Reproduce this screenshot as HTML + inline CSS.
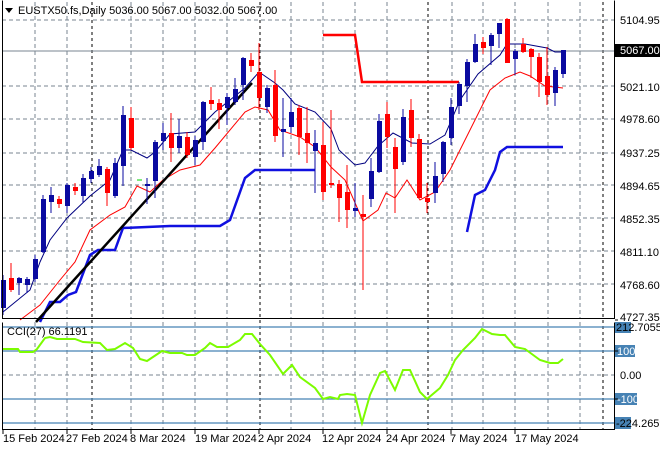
<!DOCTYPE html>
<html><head><meta charset="utf-8"><style>
html,body{margin:0;padding:0;background:#fff;width:660px;height:450px;overflow:hidden}
svg{display:block;font-family:"Liberation Sans",sans-serif;font-size:11px}
</style></head><body>
<svg width="660" height="450" viewBox="0 0 660 450" xmlns="http://www.w3.org/2000/svg">
<rect width="660" height="450" fill="#fff"/>
<g stroke="#7a8590" stroke-width="1" stroke-dasharray="4,3" fill="none">
<path d="M2 20H614M2 86H614M2 119H614M2 153H614M2 185H614M2 218H614M2 251H614M2 284H614"/>
<path d="M35 2V318M67 2V318M131 2V318M163 2V318M195 2V318M227 2V318M291 2V318M323 2V318M355 2V318M387 2V318M452 2V318M483 2V318M515 2V318M548 2V318M580 2V318"/>
<path d="M35 322V429M67 322V429M131 322V429M163 322V429M195 322V429M227 322V429M291 322V429M323 322V429M355 322V429M387 322V429M452 322V429M483 322V429M515 322V429M548 322V429M580 322V429"/>
<path d="M2 375H614"/>
</g>
<g stroke="#000" stroke-width="1" stroke-dasharray="3,3" fill="none">
<path d="M92 2V429M260 2V429M428 2V429M603 2V429"/>
</g>
<path d="M2 51H614" stroke="#7a8590" stroke-width="1"/>
<polyline fill="none" stroke="#1010e0" stroke-width="2.5" points="40,322 50,302 60,302 68,295 76,292 90,255 98,250 115,250 123,228 170,226 220,226 230,220 245,178 255,170 315,170"/>
<polyline fill="none" stroke="#1010e0" stroke-width="2.5" points="467,232 475,195 485,190 495,170 500,152 507,147 563,147"/>
<polyline fill="none" stroke="#f00" stroke-width="2.5" points="323,35 355,35 362,82 459,82"/>
<polyline fill="none" stroke="#000080" stroke-width="1" points="3,312 30,290 40,262 50,240 67,218 90,196 110,180 123,150 131,150 147,158 155,152 170,134 195,132 215,112 245,88 259,72 275,83 283,90 295,104 315,112 331,129 339,150 355,165 365,163 378,146 393,133 412,143 430,144 445,135 460,100 478,74 500,55 507,44 525,44 547,48 555,52 563,52"/>
<polyline fill="none" stroke="#f00" stroke-width="1" points="20,320 40,305 60,280 75,262 90,230 110,215 125,207 137,186 150,192 163,180 180,170 200,165 215,148 245,112 255,107 268,110 280,130 300,137 315,147 331,167 345,180 363,221 378,210 386,193 395,198 407,180 420,200 435,192 450,170 470,130 490,90 505,78 520,72 530,76 545,86 563,88"/>
<path d="M36 322L252 83" stroke="#000" stroke-width="2.5"/>
<g stroke="#0a0aa0" stroke-width="1" fill="none">
<path d="M3 275V315M19 277V295M27 277V293M35 255V282M43 195V253M51 187V213M67 183V213M83 174V203M91 167V183M99 159V177M115 158V198M123 106V186M147 178V204M155 140V198M163 123V150M179 119V153M195 136V165M203 101V150M227 93V125M235 78V105M243 57V100M267 85V113M283 98V157M291 98V133M315 130V193M355 183V217M371 158V207M379 114V173M403 109V165M435 162V203M443 141V182M451 98V145M459 82V114M467 59V102M475 34V63M491 33V65M499 23V48M515 49V75M555 67V106M563 50V78"/>
</g>
<g fill="#0a0aa0">
<rect x="1" y="280" width="5" height="28"/><rect x="17" y="278" width="5" height="5"/><rect x="25" y="279" width="5" height="6"/><rect x="33" y="259" width="5" height="20"/><rect x="41" y="199" width="5" height="53"/><rect x="49" y="195" width="5" height="7"/><rect x="65" y="185" width="5" height="21"/><rect x="81" y="178" width="5" height="18"/><rect x="89" y="171" width="5" height="8"/><rect x="97" y="166" width="5" height="9"/><rect x="113" y="163" width="5" height="33"/><rect x="121" y="115" width="5" height="51"/><rect x="145" y="184" width="5" height="2"/><rect x="153" y="142" width="5" height="39"/><rect x="161" y="133" width="5" height="8"/><rect x="177" y="136" width="5" height="12"/><rect x="193" y="140" width="5" height="17"/><rect x="201" y="102" width="5" height="40"/><rect x="225" y="97" width="5" height="11"/><rect x="233" y="89" width="5" height="13"/><rect x="241" y="58" width="5" height="27"/><rect x="265" y="88" width="5" height="19"/><rect x="281" y="129" width="5" height="3"/><rect x="289" y="112" width="5" height="15"/><rect x="313" y="143" width="5" height="8"/><rect x="353" y="208" width="5" height="3"/><rect x="369" y="171" width="5" height="28"/><rect x="377" y="121" width="5" height="51"/><rect x="401" y="117" width="5" height="45"/><rect x="433" y="176" width="5" height="17"/><rect x="441" y="142" width="5" height="32"/><rect x="449" y="107" width="5" height="31"/><rect x="457" y="84" width="5" height="22"/><rect x="465" y="62" width="5" height="24"/><rect x="473" y="44" width="5" height="18"/><rect x="489" y="35" width="5" height="11"/><rect x="497" y="23" width="5" height="11"/><rect x="513" y="51" width="5" height="8"/><rect x="553" y="70" width="5" height="23"/><rect x="561" y="50" width="5" height="24"/>
</g>
<g stroke="#f00" stroke-width="1" fill="none">
<path d="M11 263V292M59 196V208M75 183V195M107 167V206M131 107V150M171 113V162M187 132V158M211 87V110M219 99V129M251 53V72M259 43V110M275 70V142M299 105V155M307 107V163M323 122V200M331 110V188M339 180V222M347 165V228M363 195V290M387 102V148M395 138V213M411 99V147M419 134V199M427 183V213M483 37V54M507 18V63M523 38V53M531 48V78M539 53V97M547 47V105"/>
</g>
<g fill="#f00">
<rect x="9" y="278" width="5" height="12"/><rect x="57" y="199" width="5" height="5"/><rect x="73" y="187" width="5" height="4"/><rect x="105" y="169" width="5" height="24"/><rect x="129" y="118" width="5" height="30"/><rect x="169" y="133" width="5" height="15"/><rect x="185" y="137" width="5" height="18"/><rect x="209" y="100" width="5" height="4"/><rect x="217" y="103" width="5" height="7"/><rect x="249" y="60" width="5" height="6"/><rect x="257" y="72" width="5" height="26"/><rect x="273" y="85" width="5" height="51"/><rect x="297" y="108" width="5" height="29"/><rect x="305" y="133" width="5" height="10"/><rect x="321" y="145" width="5" height="47"/><rect x="329" y="183" width="5" height="2"/><rect x="337" y="184" width="5" height="14"/><rect x="345" y="192" width="5" height="18"/><rect x="361" y="214" width="5" height="3"/><rect x="385" y="114" width="5" height="23"/><rect x="393" y="147" width="5" height="22"/><rect x="409" y="110" width="5" height="28"/><rect x="417" y="139" width="5" height="59"/><rect x="425" y="198" width="5" height="4"/><rect x="481" y="42" width="5" height="6"/><rect x="505" y="19" width="5" height="44"/><rect x="521" y="44" width="5" height="8"/><rect x="529" y="49" width="5" height="8"/><rect x="537" y="57" width="5" height="25"/><rect x="545" y="76" width="5" height="19"/>
</g>
<path d="M137 180H142" stroke="#00d000" stroke-width="1"/>
<g stroke="#4682b4" stroke-width="1.2">
<path d="M2 327H614M2 351H614M2 399H614M2 423H614"/>
</g>
<polyline fill="none" stroke="#7cfc00" stroke-width="2" points="3,349 18,349 20,352 33,352 37,349 45,338 50,337 57,339 75,339 83,342 100,343 107,350 115,349 125,343 133,348 140,359 147,361 162,351 170,353 182,353 187,355 195,355 205,348 210,343 217,347 228,347 240,340 245,334 252,334 260,344 270,355 283,374 292,365 300,377 315,388 323,399 330,397 338,399 340,395 347,394 355,395 362,423 370,395 380,373 385,371 395,390 403,370 410,370 420,392 427,399 440,388 448,375 455,360 463,350 475,338 482,329 492,334 500,335 505,335 515,347 525,349 540,360 550,363 558,363 563,359"/>
<path d="M2.5 0.5V318.5H614.5V0.5M2.5 322.5V429.5H614.5V322.5" stroke="#000" fill="none" stroke-width="1"/>
<path d="M5 8H13L9 13Z" fill="#000"/>
<text x="18" y="14" fill="#000">EUSTX50.fs,Daily  5036.00 5067.00 5032.00 5067.00</text>
<text x="7" y="335" fill="#000">CCI(27) 66.1191</text>
<g fill="#000">
<text x="620" y="24">5104.95</text>
<text x="620" y="91">5021.10</text>
<text x="620" y="123">4978.60</text>
<text x="620" y="157">4937.25</text>
<text x="620" y="190">4894.65</text>
<text x="620" y="223">4852.35</text>
<text x="620" y="256">4811.10</text>
<text x="620" y="289">4768.60</text>
<text x="620" y="321">4727.35</text>
<text x="620" y="379">0.00</text>
</g>
<rect x="615" y="44" width="45" height="13" fill="#000"/>
<text x="620" y="54" fill="#fff">5067.00</text>
<rect x="615" y="322" width="16" height="11" fill="#4682b4"/>
<text x="616" y="331" fill="#000">212.7055</text>
<rect x="615" y="345" width="20" height="12" fill="#4682b4"/>
<text x="617" y="355" fill="#fff">100</text>
<rect x="615" y="393" width="22" height="12" fill="#4682b4"/>
<text x="617" y="403" fill="#fff">-100</text>
<rect x="615" y="417" width="16" height="12" fill="#4682b4"/>
<text x="616" y="427" fill="#000">-224.2659</text>
<path d="M615 320H618M615 351H618M615 399H618" stroke="#000"/>
<g fill="#000">
<text x="3" y="442">15 Feb 2024</text>
<text x="66" y="442">27 Feb 2024</text>
<text x="130" y="442">8 Mar 2024</text>
<text x="195" y="442">19 Mar 2024</text>
<text x="258" y="442">2 Apr 2024</text>
<text x="322" y="442">12 Apr 2024</text>
<text x="386" y="442">24 Apr 2024</text>
<text x="450" y="442">7 May 2024</text>
<text x="515" y="442">17 May 2024</text>
</g>
<path d="M3 430V434M67 430V434M131 430V434M195 430V434M259 430V434M323 430V434M387 430V434M451 430V434M515 430V434" stroke="#000"/>
</svg>
</body></html>
